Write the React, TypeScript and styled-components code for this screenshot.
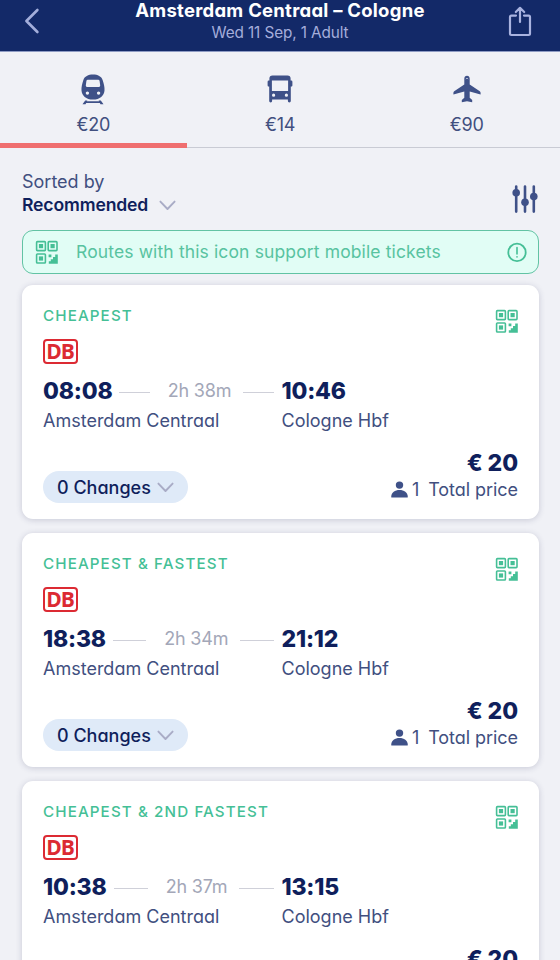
import React from "react";
import styled, { createGlobalStyle } from "styled-components";

const color = {
  navy: "#132968",
  ink: "#0f1f5c",
  slate: "#414f7f",
  icon: "#3f5188",
  muted: "#a3a7b8",
  green: "#45bf96",
  mint: "#e1fdf5",
  page: "#f0f1f6",
};

const GlobalStyle = createGlobalStyle`
  *, *::before, *::after { box-sizing: border-box; }
  body {
    margin: 0;
    background: ${color.page};
    font-family: Inter, "Liberation Sans", sans-serif;
    font-feature-settings: "cv11", "calt" 0;
  }
`;

const Screen = styled.div`
  width: 560px;
  height: 960px;
  overflow: hidden;
  display: flex;
  flex-direction: column;
  background: ${color.page};
`;

const Header = styled.header`
  flex: none;
  height: 52px;
  display: flex;
  justify-content: space-between;
  align-items: flex-start;
  padding: 0 28px 0 20px;
  background: ${color.navy};
  border-bottom: 1px solid #8f9cc4;
`;

const IconButton = styled.button<{ $top: number }>`
  width: 24px;
  display: flex;
  justify-content: center;
  margin-top: ${(p) => p.$top}px;
  padding: 0;
  border: 0;
  background: none;
`;

const Heading = styled.div`
  display: flex;
  flex-direction: column;
  align-items: center;
  gap: 3px;
  padding-left: 8px;
  white-space: nowrap;
`;

const Title = styled.h1`
  margin: 0;
  font-size: 18.5px;
  line-height: 20px;
  font-weight: 700;
  letter-spacing: 0.25px;
  color: #fff;
`;

const Subtitle = styled.div`
  font-size: 15.3px;
  line-height: 20px;
  letter-spacing: -0.1px;
  color: #a5addb;
`;

const Tabs = styled.nav`
  flex: none;
  height: 96px;
  display: grid;
  grid-template-columns: repeat(3, 1fr);
  box-shadow: inset 0 -1px 0 #c9cbd4;
`;

const Tab = styled.div<{ $active?: boolean }>`
  display: flex;
  flex-direction: column;
  align-items: center;
  padding-top: 21px;
  gap: 9px;
  border-bottom: 5px solid ${(p) => (p.$active ? "#ef6e6f" : "transparent")};
  font-size: 18px;
  line-height: 22px;
  letter-spacing: -0.3px;
  color: ${color.slate};
`;

const SortBar = styled.section`
  flex: none;
  display: flex;
  justify-content: space-between;
  align-items: flex-start;
  padding: 22px 22px 0;
  height: 82px;
`;

const SortLabel = styled.div`
  font-size: 18px;
  line-height: 24px;
  color: ${color.slate};
`;

const SortValue = styled.div`
  display: flex;
  align-items: center;
  gap: 11px;
  font-size: 17.6px;
  line-height: 22px;
  font-weight: 600;
  letter-spacing: -0.15px;
  color: ${color.ink};
`;

const FilterButton = styled(IconButton)`
  width: 26px;
`;

const Notice = styled.aside`
  flex: none;
  height: 44px;
  margin: 0 21px 11px 22px;
  padding: 0 11px 0 12px;
  display: flex;
  align-items: center;
  border: 1.5px solid #62c3a4;
  border-radius: 11px;
  background: ${color.mint};
`;

const NoticeText = styled.span`
  flex: 1;
  padding-left: 17px;
  font-size: 17.5px;
  line-height: 24px;
  letter-spacing: 0.13px;
  color: #58c3a0;
`;

const Results = styled.main`
  display: flex;
  flex-direction: column;
  gap: 14px;
  padding: 0 21px 0 22px;
`;

const Card = styled.article`
  flex: none;
  height: 234px;
  padding: 21px 21px 0 21px;
  border-radius: 11px;
  background: #fff;
  box-shadow: 0 1px 6px rgba(40, 45, 90, 0.2);
`;

const CardTop = styled.div`
  height: 20px;
  display: flex;
  justify-content: space-between;
  align-items: flex-start;
`;

const Badge = styled.div`
  font-size: 15.2px;
  line-height: 20px;
  font-weight: 500;
  letter-spacing: 1.1px;
  color: ${color.green};
`;

const QrHolder = styled.div`
  margin-top: 3px;
  margin-right: -1px;
`;

const DbLogo = styled.div`
  width: 35px;
  height: 25px;
  margin-top: 13px;
  display: flex;
  align-items: center;
  justify-content: center;
  border: 2.6px solid #dc2a33;
  border-radius: 4px;
  font-family: "Open Sans", sans-serif;
  font-size: 21px;
  line-height: 19px;
  font-weight: 700;
  letter-spacing: -1.2px;
  text-indent: -1px;
  padding-bottom: 1px;
  color: #dc2a33;
`;

const Journey = styled.div`
  display: grid;
  grid-template-columns: 238.5px 1fr;
  row-gap: 2px;
  margin-top: 13px;
`;

const Depart = styled.div`
  display: flex;
  align-items: center;
  padding-right: 8px;
`;

const Time = styled.div`
  font-size: 23px;
  line-height: 28px;
  font-weight: 800;
  letter-spacing: -0.2px;
  color: ${color.ink};
`;

const Duration = styled.div`
  margin: 0 12px 0 18px;
  font-size: 18px;
  line-height: 28px;
  letter-spacing: -0.2px;
  color: ${color.muted};
`;

const Dash = styled.div`
  flex: 1;
  height: 1px;
  margin-top: 2px;
  background: #cfd0d9;
`;

const LeadingDash = styled(Dash)`
  margin-left: 7px;
`;

const Station = styled.div`
  font-size: 18px;
  line-height: 28px;
  color: ${color.slate};
`;

const CardFooter = styled.div`
  height: 54px;
  margin-top: 14px;
  display: flex;
  justify-content: space-between;
  align-items: flex-end;
`;

const ChangesPill = styled.div`
  width: 145px;
  height: 32px;
  display: flex;
  align-items: center;
  justify-content: space-between;
  padding: 0 14px;
  border-radius: 16px;
  background: #dfeaf8;
  font-size: 18px;
  font-weight: 500;
  color: ${color.ink};
`;

const Fare = styled.div`
  height: 54px;
  display: flex;
  flex-direction: column;
  align-items: flex-end;
`;

const Price = styled.div`
  font-size: 23px;
  line-height: 28px;
  font-weight: 800;
  letter-spacing: -0.1px;
  color: ${color.ink};
`;

const FareNote = styled.div`
  display: flex;
  align-items: center;
  font-size: 18px;
  line-height: 26px;
  letter-spacing: -0.05px;
  color: ${color.slate};
`;

const Passengers = styled.span`
  display: flex;
  align-items: center;
  gap: 4px;
  margin-right: 9px;
`;

const Train = () => (
  <svg width="24" height="32" viewBox="0 0 24 32" fill={color.icon}>
    <path
      fillRule="evenodd"
      d="M12 1.6C16.8 1.6 20.4 3.4 21.7 7.2C22.9 11 23.7 14 23.5 17.4C23.2 22.4 19 26.6 12 26.6S.8 22.4.5 17.4C.3 14 1.1 11 2.3 7.2C3.6 3.4 7.2 1.6 12 1.6ZM6.8 6.8Q5.6 6.8 5.4 8L4.8 12.6Q4.7 14 6 14H18Q19.3 14 19.2 12.6L18.6 8Q18.4 6.8 17.2 6.8ZM6.4 18.4A1.7 1.7 0 1 0 6.4 21.8A1.7 1.7 0 1 0 6.4 18.4ZM17.6 18.4A1.7 1.7 0 1 0 17.6 21.8A1.7 1.7 0 1 0 17.6 18.4Z"
    />
    <path d="M4.2 27.6H6.4L5.9 28.3H18.1L17.6 27.6H19.8L22.5 31.2H19.5L18.8 30.1H5.2L4.5 31.2H1.5Z" />
  </svg>
);

const Bus = () => (
  <svg width="26" height="32" viewBox="0 0 26 32" fill={color.icon}>
    <path
      fillRule="evenodd"
      d="M5.5 2.4H20.5Q23.6 2.4 23.6 5.4V7.6H24.2Q25.4 7.6 25.4 8.8V12.4Q25.4 13.6 23.8 13.6V28Q23.8 29.4 22.3 29.4Q20.9 29.4 20.9 28V26.6H5.1V28Q5.1 29.4 3.7 29.4Q2.2 29.4 2.2 28V13.6Q.6 13.6 .6 12.4V8.8Q.6 7.6 1.8 7.6H2.4V5.4Q2.4 2.4 5.5 2.4ZM4.9 7.6V18H21.1V7.6ZM6.6 20.6A1.6 1.6 0 1 0 6.6 23.8A1.6 1.6 0 1 0 6.6 20.6ZM19.4 20.6A1.6 1.6 0 1 0 19.4 23.8A1.6 1.6 0 1 0 19.4 20.6Z"
    />
  </svg>
);

const Plane = () => (
  <svg width="28" height="32" viewBox="0 0 28 32" fill={color.icon}>
    <path d="M14 2.8C15.6 2.8 16.7 4 16.7 5.8V11.6L26.8 18.2Q27.6 18.9 27.6 20V21.6L16.7 18.4V24.8L19.2 27V29.3L14 28.2L8.8 29.3V27L11.3 24.8V18.4L.4 21.6V20Q.4 18.9 1.2 18.2L11.3 11.6V5.8C11.3 4 12.4 2.8 14 2.8Z" />
    <path d="M12.8 6Q14 4.2 15.2 6" fill="none" stroke="#aab4d2" strokeWidth="1" />
  </svg>
);

const Back = () => (
  <svg width="16" height="26" viewBox="0 0 16 26" fill="none" stroke="#a3aedb" strokeWidth="2.6" strokeLinecap="round" strokeLinejoin="round">
    <path d="M13.4 2L2.4 13L13.4 24" />
  </svg>
);

const Share = () => (
  <svg width="24" height="32" viewBox="0 0 24 32" fill="none" stroke="#a9b3e0" strokeWidth="2.2" strokeLinecap="round" strokeLinejoin="round">
    <path d="M8 9.6H3.4Q2 9.6 2 11V27.6Q2 29 3.4 29H20.6Q22 29 22 27.6V11Q22 9.6 20.6 9.6H16M12 16V2M7.8 6L12 1.8L16.2 6" />
  </svg>
);

const Chevron = () => (
  <svg width="17" height="11" viewBox="0 0 17 11" fill="none" stroke="#a9acc6" strokeWidth="1.9" strokeLinecap="round" strokeLinejoin="round">
    <path d="M1.4 1.6L8.5 9L15.6 1.6" />
  </svg>
);

const Sliders = () => (
  <svg width="26" height="28" viewBox="0 0 26 28" fill={color.icon} stroke={color.icon}>
    <path d="M4.2 1.6V26.6M13 1.6V26.6M21.8 1.6V26.6" strokeWidth="2.6" strokeLinecap="round" />
    <g stroke="none">
      <circle cx="4.2" cy="7.8" r="3.8" />
      <circle cx="13" cy="17.2" r="3.8" />
      <circle cx="21.8" cy="11.6" r="3.8" />
    </g>
  </svg>
);

const Qr = () => (
  <svg width="24" height="25" viewBox="0 0 24 25" fill={color.green}>
    <g fill="none" stroke={color.green} strokeWidth="1.6">
      <rect x="1.6" y="1.6" width="8.8" height="9" rx="0.8" />
      <rect x="13.2" y="1.6" width="8.8" height="9" rx="0.8" />
      <rect x="1.6" y="14" width="8.8" height="9" rx="0.8" />
    </g>
    <rect x="3.9" y="4" width="4.2" height="4.2" />
    <rect x="15.5" y="4" width="4.2" height="4.2" />
    <rect x="3.9" y="16.4" width="4.2" height="4.2" />
    <path d="M13.6 14.6H16.4V17.2H13.6ZM20.2 14.6H22.8V23.8H13.8V21.2H15.8V19.2H18V17H20.2Z" />
  </svg>
);

const Alert = () => (
  <svg width="20" height="20" viewBox="0 0 20 20" fill="none" stroke={color.green} strokeWidth="1.8" strokeLinecap="round">
    <circle cx="10" cy="10.4" r="8.7" />
    <path d="M10 5.6V12M10 14.7V14.9" strokeWidth="1.6" />
  </svg>
);

const Person = () => (
  <svg width="17" height="18" viewBox="0 0 17 18" fill={color.icon}>
    <circle cx="8.5" cy="4.1" r="3.7" />
    <path d="M.3 16.6V15.2C.3 11.6 4 9 8.5 9S16.7 11.6 16.7 15.2V16.6Z" />
  </svg>
);

const modes = [
  { id: "train", price: "€20", Icon: Train, active: true },
  { id: "bus", price: "€14", Icon: Bus, active: false },
  { id: "plane", price: "€90", Icon: Plane, active: false },
];

const trips = [
  { badge: "CHEAPEST", depart: "08:08", duration: "2h 38m", arrive: "10:46" },
  { badge: "CHEAPEST & FASTEST", depart: "18:38", duration: "2h 34m", arrive: "21:12" },
  { badge: "CHEAPEST & 2ND FASTEST", depart: "10:38", duration: "2h 37m", arrive: "13:15" },
];

type Trip = (typeof trips)[number];

const TripCard = ({ trip }: { trip: Trip }) => (
  <Card>
    <CardTop>
      <Badge>{trip.badge}</Badge>
      <QrHolder>
        <Qr />
      </QrHolder>
    </CardTop>
    <DbLogo>DB</DbLogo>
    <Journey>
      <Depart>
        <Time>{trip.depart}</Time>
        <LeadingDash />
        <Duration>{trip.duration}</Duration>
        <Dash />
      </Depart>
      <Time>{trip.arrive}</Time>
      <Station>Amsterdam Centraal</Station>
      <Station>Cologne Hbf</Station>
    </Journey>
    <CardFooter>
      <ChangesPill>
        0 Changes
        <Chevron />
      </ChangesPill>
      <Fare>
        <Price>€ 20</Price>
        <FareNote>
          <Passengers>
            <Person />1
          </Passengers>
          Total price
        </FareNote>
      </Fare>
    </CardFooter>
  </Card>
);

export default function App() {
  return (
    <Screen>
      <GlobalStyle />
      <Header>
        <IconButton $top={8} aria-label="Back">
          <Back />
        </IconButton>
        <Heading>
          <Title>Amsterdam Centraal – Cologne</Title>
          <Subtitle>Wed 11 Sep, 1 Adult</Subtitle>
        </Heading>
        <IconButton $top={6} aria-label="Share">
          <Share />
        </IconButton>
      </Header>
      <Tabs>
        {modes.map(({ id, price, Icon, active }) => (
          <Tab key={id} $active={active}>
            <Icon />
            {price}
          </Tab>
        ))}
      </Tabs>
      <SortBar>
        <div>
          <SortLabel>Sorted by</SortLabel>
          <SortValue>
            Recommended
            <Chevron />
          </SortValue>
        </div>
        <FilterButton $top={15} aria-label="Filters">
          <Sliders />
        </FilterButton>
      </SortBar>
      <Notice>
        <Qr />
        <NoticeText>Routes with this icon support mobile tickets</NoticeText>
        <Alert />
      </Notice>
      <Results>
        {trips.map((trip) => (
          <TripCard key={trip.badge} trip={trip} />
        ))}
      </Results>
    </Screen>
  );
}
